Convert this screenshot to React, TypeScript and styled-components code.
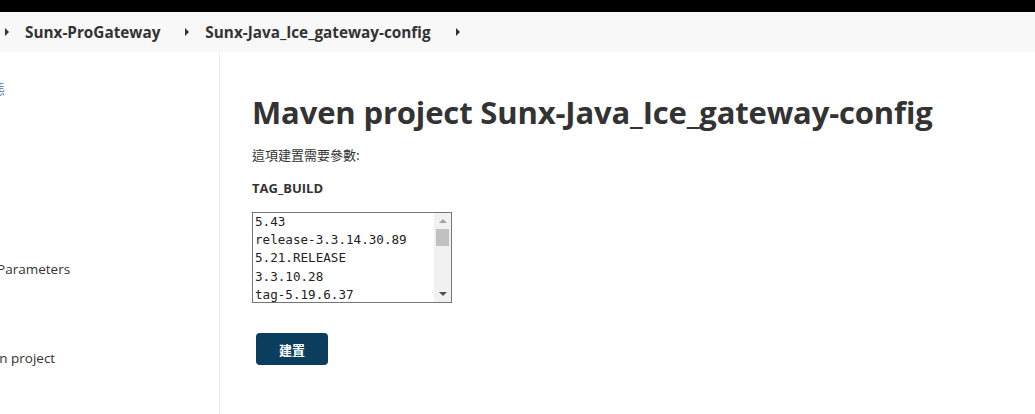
import styled, { createGlobalStyle } from "styled-components";

const GlobalStyle = createGlobalStyle`
  html, body {
    margin: 0;
    padding: 0;
    background: #fff;
    font-family: "Open Sans", "Noto Sans", "Noto Sans CJK TC", sans-serif;
    color: #333;
  }
`;

const Page = styled.div`
  width: 1035px;
  height: 414px;
  overflow: hidden;
  display: flex;
  flex-direction: column;
`;

const TopBar = styled.div`
  height: 12px;
  background: #000;
`;

const Breadcrumbs = styled.div`
  height: 40px;
  background: #f8f8f8;
  display: flex;
  align-items: center;
  padding-left: 5px;
  font-size: 15.3px;
  font-weight: 700;
  color: #333;
`;

const Crumb = styled.span`
  margin: 0 25px 0 0;
`;

const Arrow = styled.span`
  display: inline-block;
  width: 0;
  height: 0;
  border-top: 4px solid transparent;
  border-bottom: 4px solid transparent;
  border-left: 4px solid #333;
  margin-right: 16px;
`;

const Body = styled.div`
  flex: 1;
  display: flex;
`;

const Sidebar = styled.div`
  width: 219px;
  border-right: 1px solid #eee;
  overflow: hidden;
  display: flex;
  flex-direction: column;
  padding-top: 27px;
`;

const SideItem = styled.div<{ $gap: number; $shift: number; $link?: boolean }>`
  margin-top: ${(p) => p.$gap}px;
  margin-left: -${(p) => p.$shift}px;
  white-space: nowrap;
  font-size: 13.5px;
  line-height: 20px;
  color: ${(p) => (p.$link ? "#5a7aa8" : "#333")};
`;

const Main = styled.div`
  flex: 1;
  padding: 38px 0 0 32px;
`;

const Title = styled.h1`
  margin: 0;
  font-family: "Open Sans", "Noto Sans", sans-serif;
  font-size: 31px;
  font-weight: 700;
  line-height: 44px;
  color: #333;
  letter-spacing: -0.15px;
`;

const Intro = styled.p`
  margin: 11px 0 0;
  font-size: 13px;
  line-height: 20px;
  font-family: "Noto Sans CJK TC", sans-serif;
  color: #333;
`;

const ParamName = styled.div`
  margin-top: 13px;
  font-size: 13px;
  font-weight: 700;
  line-height: 20px;
`;

const ListBox = styled.div`
  margin-top: 14px;
  width: 198px;
  height: 89px;
  border: 1px solid #767676;
  display: flex;
  background: #fff;
`;

const Options = styled.div`
  flex: 1;
  padding: 0 0 0 2px;
  font-family: "DejaVu Sans Mono", "Liberation Mono", monospace;
  font-size: 12.6px;
  line-height: 18.2px;
  color: #222;
  white-space: nowrap;
  overflow: hidden;
`;

const ScrollTrack = styled.div`
  width: 17px;
  background: #f1f1f1;
  display: flex;
  flex-direction: column;
  align-items: center;
`;

const ScrollArrow = styled.div<{ $up?: boolean }>`
  width: 0;
  height: 0;
  border-left: 4px solid transparent;
  border-right: 4px solid transparent;
  ${(p) =>
    p.$up
      ? "border-bottom: 4px solid #a3a3a3; margin-top: 6px;"
      : "border-top: 4px solid #505050; margin-bottom: 6px;"}
`;

const Thumb = styled.div`
  width: 13px;
  height: 17px;
  margin-top: 6px;
  background: #c1c1c1;
`;

const Spacer = styled.div`
  flex: 1;
`;

const BuildButton = styled.button`
  display: block;
  margin: 30px 0 0 4px;
  width: 72px;
  height: 32px;
  border: none;
  border-radius: 4px;
  background: #0b3d5e;
  color: #fff;
  font-family: "Noto Sans CJK TC", sans-serif;
  font-size: 13px;
  font-weight: 700;
  cursor: pointer;
`;

const options = ["5.43", "release-3.3.14.30.89", "5.21.RELEASE", "3.3.10.28", "tag-5.19.6.37"];

export default function App() {
  return (
    <Page>
      <GlobalStyle />
      <TopBar />
      <Breadcrumbs>
        <Arrow />
        <Crumb>Sunx-ProGateway</Crumb>
        <Arrow />
        <Crumb>Sunx-Java_Ice_gateway-config</Crumb>
        <Arrow />
      </Breadcrumbs>
      <Body>
        <Sidebar>
          <SideItem $gap={0} $shift={22} $link>
            狀態
          </SideItem>
          <SideItem $gap={160} $shift={69}>
            Build with Parameters
          </SideItem>
          <SideItem $gap={69} $shift={79}>
            Delete Maven project
          </SideItem>
        </Sidebar>
        <Main>
          <Title>Maven project Sunx-Java_Ice_gateway-config</Title>
          <Intro>這項建置需要參數:</Intro>
          <ParamName>TAG_BUILD</ParamName>
          <ListBox>
            <Options>
              {options.map((o) => (
                <div key={o}>{o}</div>
              ))}
            </Options>
            <ScrollTrack>
              <ScrollArrow $up />
              <Thumb />
              <Spacer />
              <ScrollArrow />
            </ScrollTrack>
          </ListBox>
          <BuildButton>建置</BuildButton>
        </Main>
      </Body>
    </Page>
  );
}
